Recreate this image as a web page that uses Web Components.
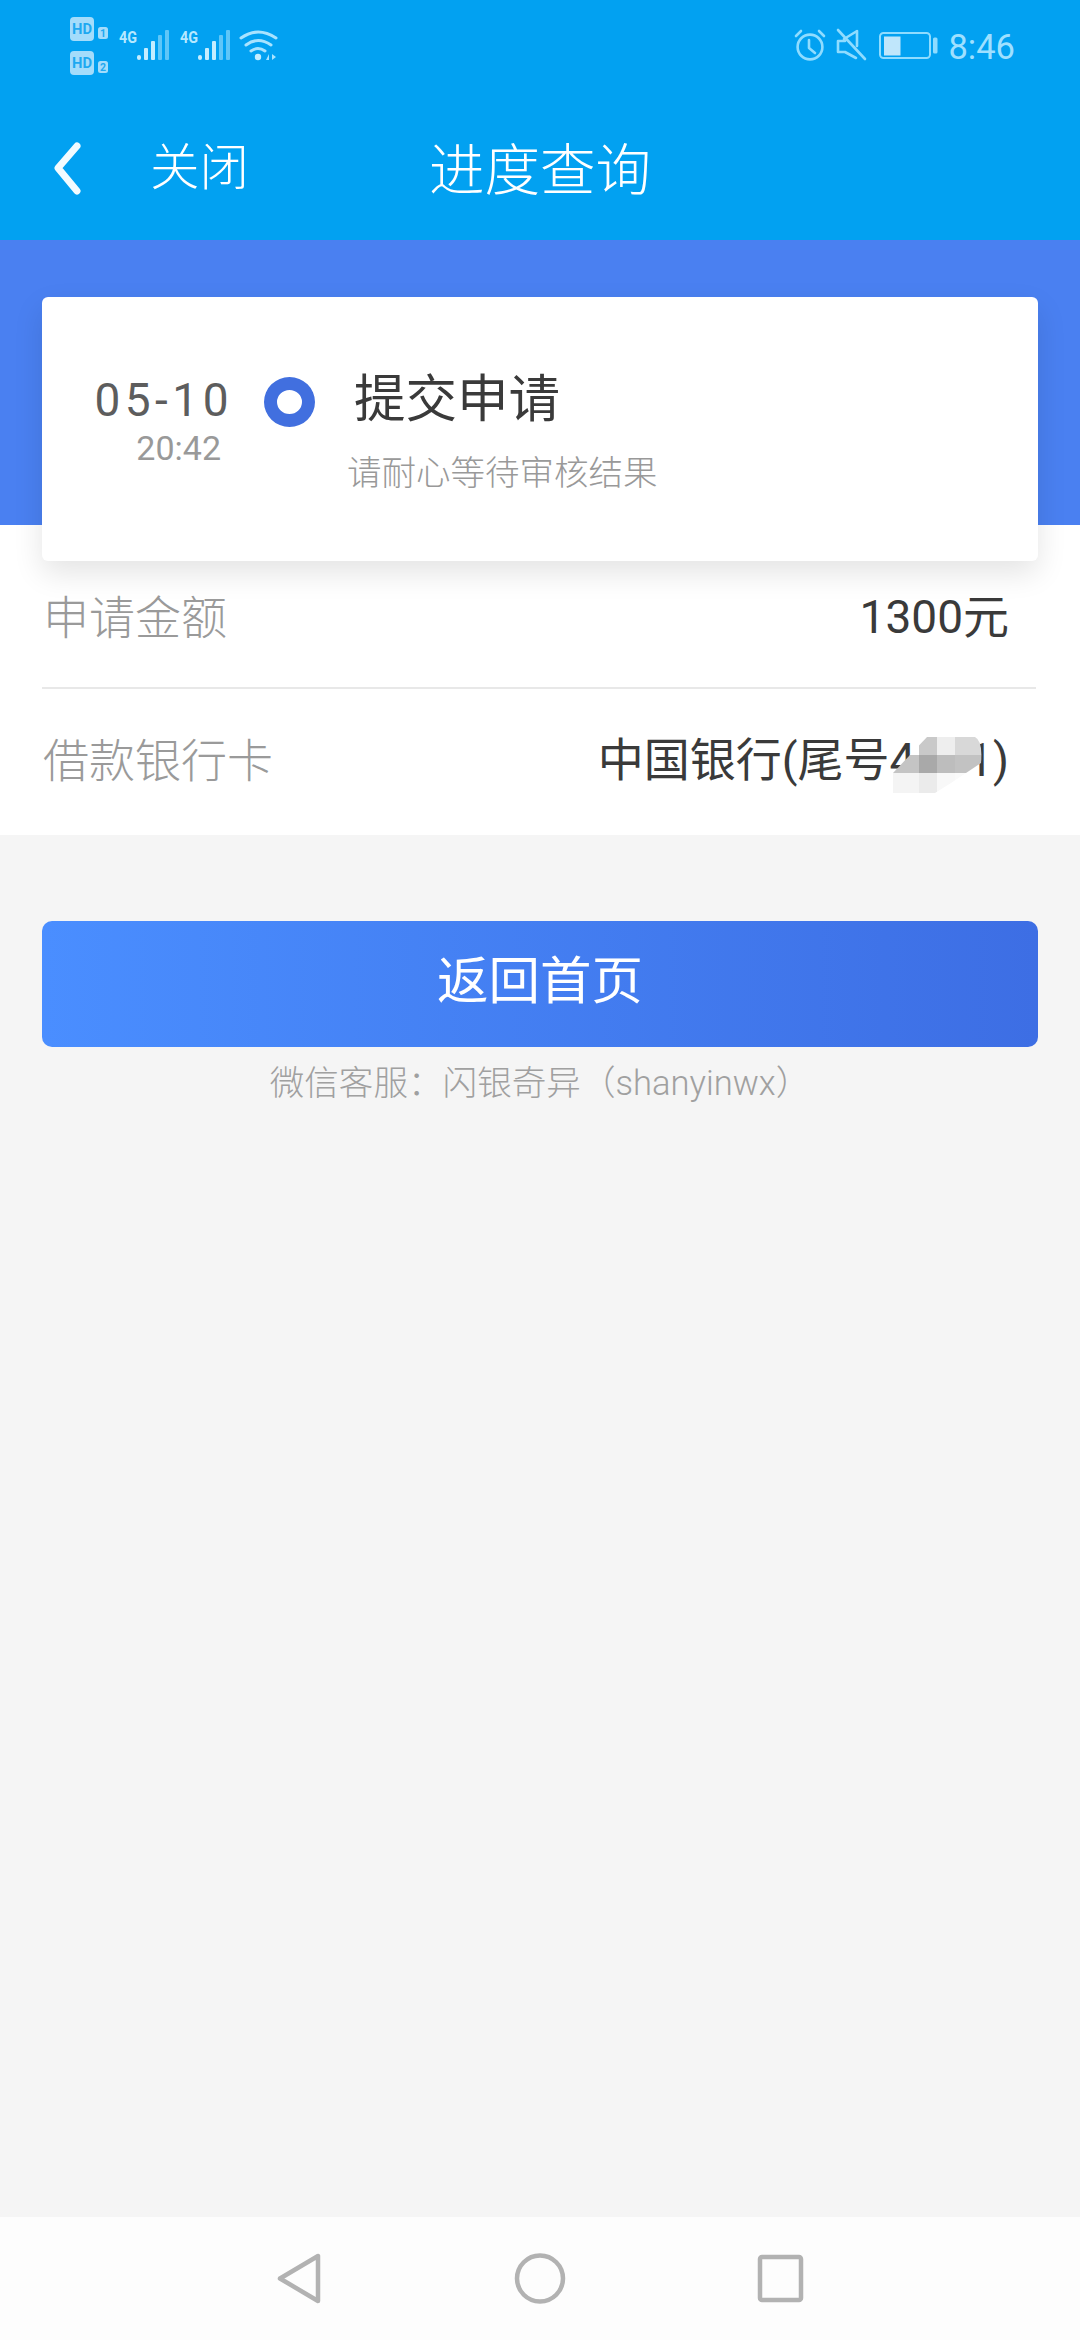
<!DOCTYPE html>
<html lang="zh-CN"><head><meta charset="utf-8"><title>进度查询</title>
<style>
html,body{margin:0;padding:0;height:2340px;overflow:hidden;background:#f5f5f5}
body{font-family:Roboto,"Noto Sans CJK SC",sans-serif;display:flex;flex-direction:column}
</style></head><body>
<status-bar>8:46</status-bar>
<nav-header back="关闭">进度查询</nav-header>
<progress-card date="05-10" time="20:42" title="提交申请" note="请耐心等待审核结果"></progress-card>
<info-list>
  <info-row label="申请金额" first>1300元</info-row>
  <info-row label="借款银行卡" mosaic>中国银行(尾号4&#8199;&#8199;1)</info-row>
</info-list>
<primary-button>返回首页</primary-button>
<help-note>微信客服：闪银奇异（shanyinwx）</help-note>
<system-nav></system-nav>
<script>
function def(name, html, init){
  customElements.define(name, class extends HTMLElement{
    connectedCallback(){
      if(this.shadowRoot) return;
      const r=this.attachShadow({mode:'open'});
      r.innerHTML=html;
      if(init) init(this,r);
    }
  });
}
const bars=(x)=>`<g fill="#c4edff"><rect x="${x}" y="55" width="4" height="5" rx="2"/><rect x="${x+7}" y="48" width="4" height="12" rx="1"/><rect x="${x+14}" y="41" width="4" height="19" rx="1"/></g><g fill="#5fc6f8"><rect x="${x+21}" y="35" width="4" height="25" rx="1"/><rect x="${x+28}" y="30" width="4" height="30" rx="1"/></g>`;
const fourG=(x)=>`<text x="${x}" y="43" font-family="Roboto" font-weight="700" font-size="17" fill="#b5e8ff" textLength="18" lengthAdjust="spacingAndGlyphs">4G</text>`;
const hd=(y,n)=>`<rect x="70" y="${y}" width="24" height="24" rx="4" fill="#a4dcfb"/><text x="72" y="${y+17}" font-family="Roboto" font-weight="700" font-size="15" fill="#1ea9f1" textLength="20" lengthAdjust="spacingAndGlyphs">HD</text><rect x="98" y="${y+10}" width="10" height="12" rx="2.5" fill="#a4dcfb"/><text x="100" y="${y+20}" font-family="Roboto" font-weight="700" font-size="10" fill="#1ea9f1" textLength="6" lengthAdjust="spacingAndGlyphs">${n}</text>`;
def('status-bar',`<style>
:host{display:flex;height:96px;background:#02a1f1;justify-content:space-between;color:#9fe0ff;font:34.500px/1 Roboto,sans-serif;padding-left:60px;flex:none}
svg{display:block}
.r{display:flex;align-items:center;padding:0 65px 0 0;gap:5px}
.t{position:relative;top:-1px}
</style>
<svg width="230" height="96" viewBox="60 0 230 96" aria-hidden="true">
${hd(17,'1')}${hd(51,'2')}${fourG(119)}${bars(137)}${fourG(180)}${bars(198)}
<g fill="none" stroke="#a8e3ff" stroke-width="3" stroke-linecap="round"><path d="M241 38Q258 26 276 38"/><path d="M246 45Q258 36 271 45"/><path d="M251 51Q258 46 265 51"/></g>
<circle cx="258" cy="57" r="3.2" fill="#c4edff"/><path d="M266 60l3-6v6zM272 54l4 3-4 3z" fill="#a8e3ff"/>
</svg>
<div class="r">
<svg width="150" height="96" viewBox="795 0 150 96" aria-hidden="true">
<g fill="none" stroke="#8fdcff" stroke-width="2.6" stroke-linecap="round" stroke-linejoin="round">
<circle cx="812" cy="47" r="12.4"/><path d="M811 40v8l6 5"/><path d="M798 36l5-5M826 36l-5-5"/>
<path d="M840 30l27 29M847 41h-7v11h7l11 6M846 39l13-8v15"/>
</g>
<rect x="882" y="33" width="50" height="25" rx="3.5" fill="none" stroke="#8fdcff" stroke-width="2"/>
<rect x="886" y="36.500" width="16.500" height="19" fill="#bfe6fb"/>
<rect x="935" y="37.500" width="4.500" height="16" rx="1.500" fill="#8fdcff"/>
</svg>
<span class="t"><slot></slot></span></div>`);
def('nav-header',`<style>
:host{display:grid;grid-template-columns:1fr auto 1fr;align-items:center;height:144px;background:#02a1f1;color:#fff;font-family:"Noto Sans CJK SC",sans-serif;font-weight:300;flex:none}
.b{display:flex;align-items:center;padding-left:54px;gap:69px;font-size:49.500px;line-height:60px}
.b span{position:relative;top:-4px}
.t{font-size:55.500px;line-height:70px;position:relative;top:-2px}
svg{display:block;flex:none}
</style>
<div class="b"><svg width="27" height="56" viewBox="54 138 27 56" aria-hidden="true"><path d="M77 144L58 166L77 189" fill="none" stroke="#f2fbff" stroke-width="7" stroke-linecap="round" stroke-linejoin="round"/></svg><span id="b"></span></div>
<div class="t"><slot></slot></div><div></div>`,(h,r)=>{r.getElementById('b').textContent=h.getAttribute('back')});
def('progress-card',`<style>
:host{display:block;padding:57px 42px 0;background:linear-gradient(#4a80f1 285px,#fff 285px);height:264px;position:relative;z-index:1;flex:none}
.c{height:264px;background:#fff;border-radius:6px;box-shadow:0 12px 30px rgba(0,0,0,.11);display:flex;font-family:Roboto,"Noto Sans CJK SC",sans-serif;box-sizing:border-box}
.d{width:188px;flex:none;text-align:right;padding-top:78px;box-sizing:border-box}
.d b{display:block;font-weight:400;font-size:46px;line-height:50px;letter-spacing:4.500px;color:#5d5d5d;margin-right:-3px}
.d i{display:block;font-style:normal;font-size:34px;line-height:40px;color:#999;margin-top:3px;margin-right:9px}
.o{flex:none;width:51px;height:50px;box-sizing:border-box;border:13px solid #416fdf;border-radius:50%;margin:80px 0 0 34px;background:#fff}
.x{padding:0 0 0 32px;font-family:"Noto Sans CJK SC",sans-serif}
.x h2{margin:68px 0 0 7px;font-weight:400;font-size:51.500px;line-height:60px;color:#3a3a3a}
.x p{margin:23px 0 0;font-weight:300;font-size:34.500px;line-height:44px;color:#999;white-space:nowrap}
</style>
<div class="c"><div class="d"><b id="a"></b><i id="e"></i></div><div class="o"></div><div class="x"><h2 id="f"></h2><p id="g"></p></div></div>`,(h,r)=>{
  r.getElementById('a').textContent=h.getAttribute('date');
  r.getElementById('e').textContent=h.getAttribute('time');
  r.getElementById('f').textContent=h.getAttribute('title');
  r.getElementById('g').textContent=h.getAttribute('note');
});
def('info-list',`<style>:host{display:block;background:#fff;padding-left:42px;height:274px;flex:none}</style><slot></slot>`);
def('info-row',`<style>
:host{display:flex;justify-content:space-between;align-items:center;box-sizing:border-box;height:147px;padding:0 27px 6px 1px;margin-right:44px;font-family:Roboto,"Noto Sans CJK SC",sans-serif;font-size:46px;line-height:60px;position:relative}
:host([first]){height:128px;padding-bottom:14px;border-bottom:2px solid #e8e8e8}
.l{color:#9a9a9a;font-family:"Noto Sans CJK SC",sans-serif;font-weight:300;position:relative;top:-3px}
.v{color:#3a3a3a;white-space:pre}
svg{position:absolute;left:851px;top:48px;display:none}
:host([mosaic]) svg{display:block}
</style><span class="l" id="l"></span><span class="v"><slot></slot></span>
<svg width="90" height="56" viewBox="0 0 90 56" aria-hidden="true"><defs><clipPath id="m"><path d="M0 36L34 0H82Q90 4 88 26L58 46L42 56H0Z"/></clipPath></defs><g clip-path="url(#m)" shape-rendering="crispEdges">
<rect x="0" y="0" width="26" height="18" fill="#fff"/><rect x="26" y="0" width="18" height="18" fill="#c9c9c9"/><rect x="44" y="0" width="18" height="18" fill="#eee"/><rect x="62" y="0" width="28" height="18" fill="#d8d8d8"/>
<rect x="0" y="18" width="26" height="18" fill="#c4c4c4"/><rect x="26" y="18" width="18" height="18" fill="#a9a9a9"/><rect x="44" y="18" width="18" height="18" fill="#bdbdbd"/><rect x="62" y="18" width="28" height="18" fill="#c2c2c2"/>
<rect x="0" y="36" width="26" height="20" fill="#f4f4f4"/><rect x="26" y="36" width="18" height="20" fill="#ebebeb"/><rect x="44" y="36" width="18" height="20" fill="#f8f8f8"/><rect x="62" y="36" width="28" height="20" fill="#fafafa"/></g></svg>`,
(h,r)=>{r.getElementById('l').textContent=h.getAttribute('label')});
def('primary-button',`<style>
:host{display:flex;align-items:center;justify-content:center;margin:86px 42px 0;height:126px;box-sizing:border-box;padding-bottom:14px;border-radius:10px;background:linear-gradient(90deg,#4a8eff,#3d6ee4);color:#fff;font-family:"Noto Sans CJK SC",sans-serif;font-size:51.500px;line-height:60px;flex:none}
</style><slot></slot>`);
def('help-note',`<style>
:host{display:block;margin-top:12px;text-align:center;color:#a0a0a0;font-family:Roboto,"Noto Sans CJK SC",sans-serif;font-weight:300;font-size:34.600px;line-height:48px;flex:1}
</style><slot></slot>`);
def('system-nav',`<style>
:host{display:flex;justify-content:center;height:123px;background:#fdfdfd;flex:none}
svg{display:block}
</style>
<svg width="680" height="123" viewBox="200 2217 680 123" aria-hidden="true"><g fill="none" stroke="#b2b2b2" stroke-width="4.500" stroke-linejoin="round">
<path d="M318 2256V2301L280 2278.500Z"/>
<circle cx="540" cy="2278.500" r="23"/>
<rect x="760" y="2257" width="41" height="43" rx="2"/></g></svg>`);
</script>
</body></html>
